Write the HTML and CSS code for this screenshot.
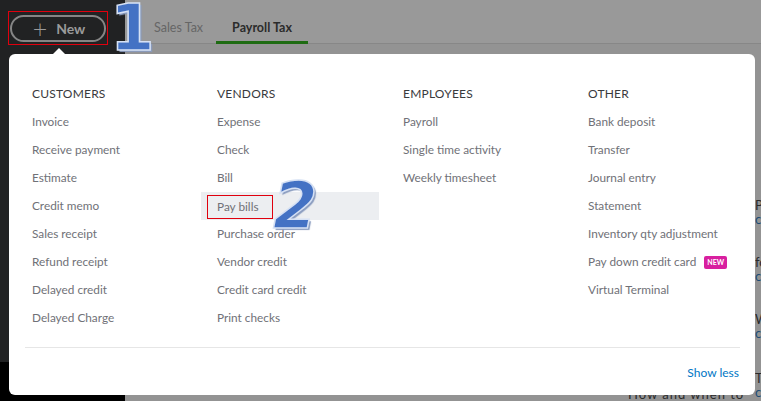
FILE: index.html
```html
<!DOCTYPE html>
<html lang="en">
<head>
  <meta charset="UTF-8" />
  <title>New menu</title>
  <link rel="stylesheet" href="styles.css">
</head>
<body>
  <div class="app">
    <aside class="sidebar">
      <div class="sidebar-top">
        <div class="new-wrap">
          <button class="new-btn"><span class="plus">+</span>New</button>
        </div>
      </div>
      <div class="sidebar-foot"></div>
    </aside>

    <main class="main">
      <div class="topbar">
        <div class="tab">Sales Tax</div>
        <div class="tab active">Payroll Tax</div>
      </div>
      <div class="page">
        <div class="peek p1">Pay<br><span class="blue">conn</span></div>
        <div class="peek p2">for<br><span class="blue">conn</span></div>
        <div class="peek p3">Wh<br><span class="blue">conn</span></div>
        <div class="peek p4">Tax<br><span class="blue">conn</span></div>
        <div class="peek-bottom">How and when to file taxes</div>
      </div>
    </main>
  </div>

  <div class="caret"></div>
  <div id="newMenu">
    <div class="menu-cols">
      <div class="menu-col">
        <div class="col-title">CUSTOMERS</div>
        <div class="menu-item">Invoice</div>
        <div class="menu-item">Receive payment</div>
        <div class="menu-item">Estimate</div>
        <div class="menu-item">Credit memo</div>
        <div class="menu-item">Sales receipt</div>
        <div class="menu-item">Refund receipt</div>
        <div class="menu-item">Delayed credit</div>
        <div class="menu-item">Delayed Charge</div>
      </div>
      <div class="menu-col">
        <div class="col-title">VENDORS</div>
        <div class="menu-item">Expense</div>
        <div class="menu-item">Check</div>
        <div class="menu-item">Bill</div>
        <div class="menu-item hover"><span class="mark">Pay bills</span></div>
        <div class="menu-item">Purchase order</div>
        <div class="menu-item">Vendor credit</div>
        <div class="menu-item">Credit card credit</div>
        <div class="menu-item">Print checks</div>
      </div>
      <div class="menu-col">
        <div class="col-title">EMPLOYEES</div>
        <div class="menu-item">Payroll</div>
        <div class="menu-item">Single time activity</div>
        <div class="menu-item">Weekly timesheet</div>
      </div>
      <div class="menu-col">
        <div class="col-title">OTHER</div>
        <div class="menu-item">Bank deposit</div>
        <div class="menu-item">Transfer</div>
        <div class="menu-item">Journal entry</div>
        <div class="menu-item">Statement</div>
        <div class="menu-item">Inventory qty adjustment</div>
        <div class="menu-item">Pay down credit card <span class="badge">NEW</span></div>
        <div class="menu-item">Virtual Terminal</div>
      </div>
    </div>
    <div class="menu-foot">
      <a class="show-less">Show less</a>
    </div>
  </div>

  <div class="step step-1">1</div>
  <div class="step step-2">2</div>
</body>
</html>
```

FILE: styles.css
```css
body {
  margin: 0;
  width: 761px;
  height: 401px;
  overflow: hidden;
  position: relative;
  font-family: 'Lato', 'Noto Sans', sans-serif;
  font-size: 12px;
}

.app {
  display: flex;
  height: 401px;
  overflow: hidden;
}

/* left nav */
.sidebar {
  width: 125px;
  display: flex;
  flex-direction: column;
}

.sidebar-top {
  flex: 1;
  background: #212223;
}

.sidebar-foot {
  height: 39px;
  background: #000;
}

.new-wrap {
  display: inline-block;
  margin: 11px 0 0 8px;
  padding: 3px 0 2px 1px;
  width: 97px;
  border: 1px solid #e0000e;
}

.new-btn {
  display: flex;
  align-items: center;
  justify-content: center;
  width: 96px;
  height: 27px;
  border: 2px solid #858585;
  border-radius: 14px;
  background: transparent;
  color: #9a9a9a;
  font-family: 'Lato', sans-serif;
  font-weight: 700;
  font-size: 14px;
  padding: 0 0 0 2px;
}

.new-btn .plus {
  font-weight: 300;
  font-size: 25px;
  line-height: 20px;
  margin: -2px 9px 0 0;
}

/* main (under overlay) */
.main {
  flex: 1;
  display: flex;
  flex-direction: column;
  background: #939393;
}

.topbar {
  height: 43px;
  display: flex;
  align-items: stretch;
  padding-left: 13px;
  background: #999;
  border-bottom: 1px solid #878787;
}

.tab {
  display: flex;
  align-items: center;
  padding: 14px 13px 0 16px;
  color: #666;
  font-size: 12.5px;
  border-bottom: 3px solid transparent;
  margin-bottom: -1px;
}

.tab.active {
  color: #2b2b2b;
  font-weight: 700;
  padding: 14px 16px 0;
  border-bottom-color: #1e6b12;
}

.page {
  flex: 1;
  position: relative;
  overflow: hidden;
  color: #2a2a2b;
  font-size: 13px;
}

.peek {
  position: absolute;
  left: 630px;
  line-height: 14px;
}

.peek .blue {
  color: #1d4b73;
}

.p1 { top: 154px; }
.p2 { top: 211px; }
.p3 { top: 268px; }
.p4 { top: 327px; }

.peek-bottom {
  position: absolute;
  left: 503px;
  top: 343px;
  line-height: 14px;
  font-size: 13px;
  letter-spacing: 1px;
}

/* dropdown */
.caret {
  position: absolute;
  left: 53px;
  top: 48px;
  width: 0;
  height: 0;
  border-left: 6px solid transparent;
  border-right: 6px solid transparent;
  border-bottom: 6px solid #fff;
}

#newMenu {
  position: absolute;
  left: 9px;
  top: 54px;
  width: 746px;
  height: 341px;
  background: #fff;
  border-radius: 6px;
  box-sizing: border-box;
  padding-top: 26px;
}

.menu-cols {
  display: grid;
  grid-template-columns: 185px 186px 185px 185px;
  padding-left: 23px;
  height: 251px;
}

.col-title {
  line-height: 28px;
  color: #393a3d;
  font-size: 12px;
  letter-spacing: 0.2px;
}

.menu-item {
  line-height: 28px;
  color: #707177;
  font-size: 11.8px;
  margin-left: -16px;
  padding-left: 16px;
  width: 162px;
  white-space: nowrap;
}

.menu-item.hover {
  background: #eceef1;
}

.mark {
  display: inline-block;
  margin-left: -10px;
  padding: 0 13px 0 9px;
  line-height: 22px;
  border: 1px solid #e0000e;
  vertical-align: middle;
}

.badge {
  display: inline-block;
  margin-left: 5px;
  padding: 0 3px;
  line-height: 13px;
  border-radius: 2px;
  background: #d81f9f;
  color: #fff;
  font-size: 7px;
  font-weight: 700;
  vertical-align: 1px;
}

.menu-foot {
  margin: 16px 15px 0 16px;
  border-top: 1px solid #e6e6e6;
  padding-top: 17px;
  text-align: right;
}

.show-less {
  color: #0077c5;
  font-size: 12px;
  line-height: 14px;
  padding-right: 1px;
}

/* screenshot annotations */
.step {
  position: absolute;
  font-family: 'DejaVu Sans', sans-serif;
  font-weight: 700;
  font-size: 64px;
  line-height: 64px;
  color: #4472c4;
  -webkit-text-stroke: 1.5px #d6e1f4;
  text-shadow: 2px 2px 1px #8a9cbf;
}

.step-1 {
  left: 110px;
  top: -4px;
}

.step-2 {
  left: 273px;
  top: 174px;
  font-style: italic;
}
```
